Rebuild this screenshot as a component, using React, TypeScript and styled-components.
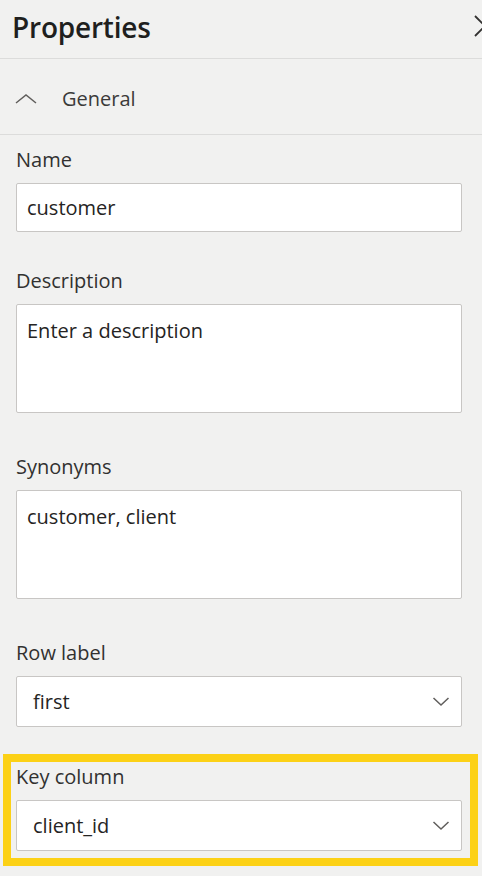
import React from "react";
import styled, { createGlobalStyle } from "styled-components";

const GlobalStyle = createGlobalStyle`
  html, body {
    margin: 0;
    padding: 0;
    background: #f1f1f0;
  }
  body {
    font-family: "Open Sans", "Noto Sans", sans-serif;
    color: #252423;
  }
`;

const Panel = styled.div`
  width: 482px;
  height: 876px;
  overflow: hidden;
  background: #f1f1f0;
  display: flex;
  flex-direction: column;
`;

const Header = styled.div`
  height: 59px;
  display: flex;
  align-items: center;
  justify-content: space-between;
  padding-left: 12px;
  border-bottom: 1px solid #dcdcdb;
  box-sizing: border-box;
  overflow: hidden;
`;

const Title = styled.h1`
  margin: 0 0 4px;
  font-size: 28px;
  font-weight: 600;
  color: #201f1e;
  letter-spacing: -0.2px;
`;

/* the close button is cut by the panel's right edge */
const CloseButton = styled.div`
  flex-shrink: 0;
  width: 8px;
  height: 24px;
  margin-bottom: 6px;
  overflow: hidden;
  display: flex;
  align-items: center;
`;

const SectionToggle = styled.div`
  height: 76px;
  display: flex;
  align-items: center;
  gap: 25px;
  padding: 4px 0 0 15px;
  border-bottom: 1px solid #dcdcdb;
  box-sizing: border-box;
  font-size: 20px;
  color: #3b3a39;
`;

const Body = styled.div`
  display: flex;
  flex-direction: column;
  padding: 12px 4px 0 3px;
`;

const Field = styled.div<{ $highlight?: boolean; $gap: number }>`
  display: flex;
  flex-direction: column;
  padding: ${(p) => (p.$highlight ? "2px 8px 7px 5px" : "0 16px 0 13px")};
  margin-bottom: ${(p) => p.$gap}px;
  border: ${(p) => (p.$highlight ? "8px solid #fcd116" : "none")};
`;

const Label = styled.label`
  font-size: 20px;
  line-height: 26px;
  color: #323130;
  margin-bottom: 10px;
`;

const Box = styled.div<{ $height: number }>`
  height: ${(p) => p.$height}px;
  background: #ffffff;
  border: 1px solid #c8c6c4;
  border-radius: 2px;
  box-sizing: border-box;
  display: flex;
  align-items: ${(p) => (p.$height > 60 ? "flex-start" : "center")};
  justify-content: space-between;
  padding: ${(p) => (p.$height > 60 ? "12px 10px" : "0 10px")};
  font-size: 20px;
  color: #252423;
`;

const SelectValue = styled.span`
  padding-left: 6px;
`;

const Chevron = styled.svg`
  width: 18px;
  height: 11px;
  margin-right: 1px;
`;

const ChevronDown = () => (
  <Chevron viewBox="0 0 18 11">
    <path d="M1.5 2 L9 9 L16.5 2" fill="none" stroke="#605e5c" strokeWidth="1.5" />
  </Chevron>
);

const App: React.FC = () => (
  <Panel>
    <GlobalStyle />
    <Header>
      <Title>Properties</Title>
      <CloseButton>
        <svg width="22" height="22" viewBox="0 0 22 22" style={{ flexShrink: 0 }}>
          <path d="M1 1 L21 21 M21 1 L1 21" stroke="#323130" strokeWidth="1.8" fill="none" />
        </svg>
      </CloseButton>
    </Header>

    <SectionToggle>
      <svg width="22" height="10" viewBox="0 0 22 10">
        <path d="M1 9 L11 1 L21 9" fill="none" stroke="#605e5c" strokeWidth="1.5" />
      </svg>
      <span>General</span>
    </SectionToggle>

    <Body>
      <Field $gap={36}>
        <Label>Name</Label>
        <Box $height={49}>customer</Box>
      </Field>
      <Field $gap={41}>
        <Label>Description</Label>
        <Box $height={109}>Enter a description</Box>
      </Field>
      <Field $gap={41}>
        <Label>Synonyms</Label>
        <Box $height={109}>customer, client</Box>
      </Field>
      <Field $gap={27}>
        <Label>Row label</Label>
        <Box $height={51}>
          <SelectValue>first</SelectValue>
          <ChevronDown />
        </Box>
      </Field>
      <Field $highlight $gap={0}>
        <Label>Key column</Label>
        <Box $height={51}>
          <SelectValue>client_id</SelectValue>
          <ChevronDown />
        </Box>
      </Field>
    </Body>
  </Panel>
);

export default App;
